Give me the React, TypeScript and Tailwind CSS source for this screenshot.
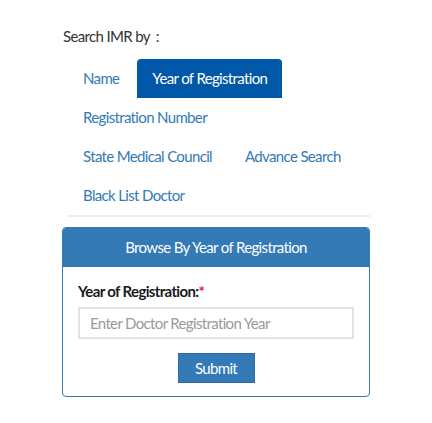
import React from "react";

const tabs = [
  { label: "Name", active: false },
  { label: "Year of Registration", active: true },
  { label: "Registration Number", active: false },
  { label: "State Medical Council", active: false },
  { label: "Advance Search", active: false },
  { label: "Black List Doctor", active: false },
];

export default function App() {
  return (
    <div className="min-h-[423px] w-[432px] bg-white font-['Lato',sans-serif] text-[15px] tracking-[-0.65px]">
      <div className="pl-[62px] pr-[62px] pt-[26px]">
        <p className="pl-[1px] text-[15px] leading-[20px] text-[#333]">Search IMR by&nbsp; :</p>

        <ul className="mt-[13px] ml-[5px] flex flex-wrap border-b-2 border-[#eee]">
          {tabs.map((t) => (
            <li key={t.label} className="mr-[2px] ml-[1px]">
              <a
                href="#"
                onClick={(e) => e.preventDefault()}
                className={
                  t.active
                    ? "block h-[39px] rounded-t-[4px] bg-[#0158a9] px-[15px] leading-[39px] text-white"
                    : "block h-[39px] px-[15px] leading-[39px] text-[#337ab7]"
                }
              >
                {t.label}
              </a>
            </li>
          ))}
        </ul>

        <div className="mt-[10px] overflow-hidden rounded-[4px] border border-[#337ab7]">
          <div className="h-[39px] bg-[#337ab7] text-center leading-[39px] text-white">
            Browse By Year of Registration
          </div>
          <div className="px-[15px] pb-[13px] pt-[14px]">
            <label className="block text-[15px] font-bold leading-[20px] text-[#1a1a1a]">
              Year of Registration:<span className="text-[#e02020]">*</span>
            </label>
            <input
              type="text"
              placeholder="Enter Doctor Registration Year"
              className="mt-[6px] block h-[32px] w-full border-2 border-[#e3e3e3] px-[10px] text-[15px] tracking-[-0.65px] text-[#555] placeholder:text-[#9a9a9a] outline-none"
            />
            <div className="mt-[14px] flex justify-center">
              <button className="h-[30px] w-[77px] border border-[#2e6da4] bg-[#337ab7] text-[15px] tracking-[-0.65px] text-white">
                Submit
              </button>
            </div>
          </div>
        </div>
      </div>
    </div>
  );
}
